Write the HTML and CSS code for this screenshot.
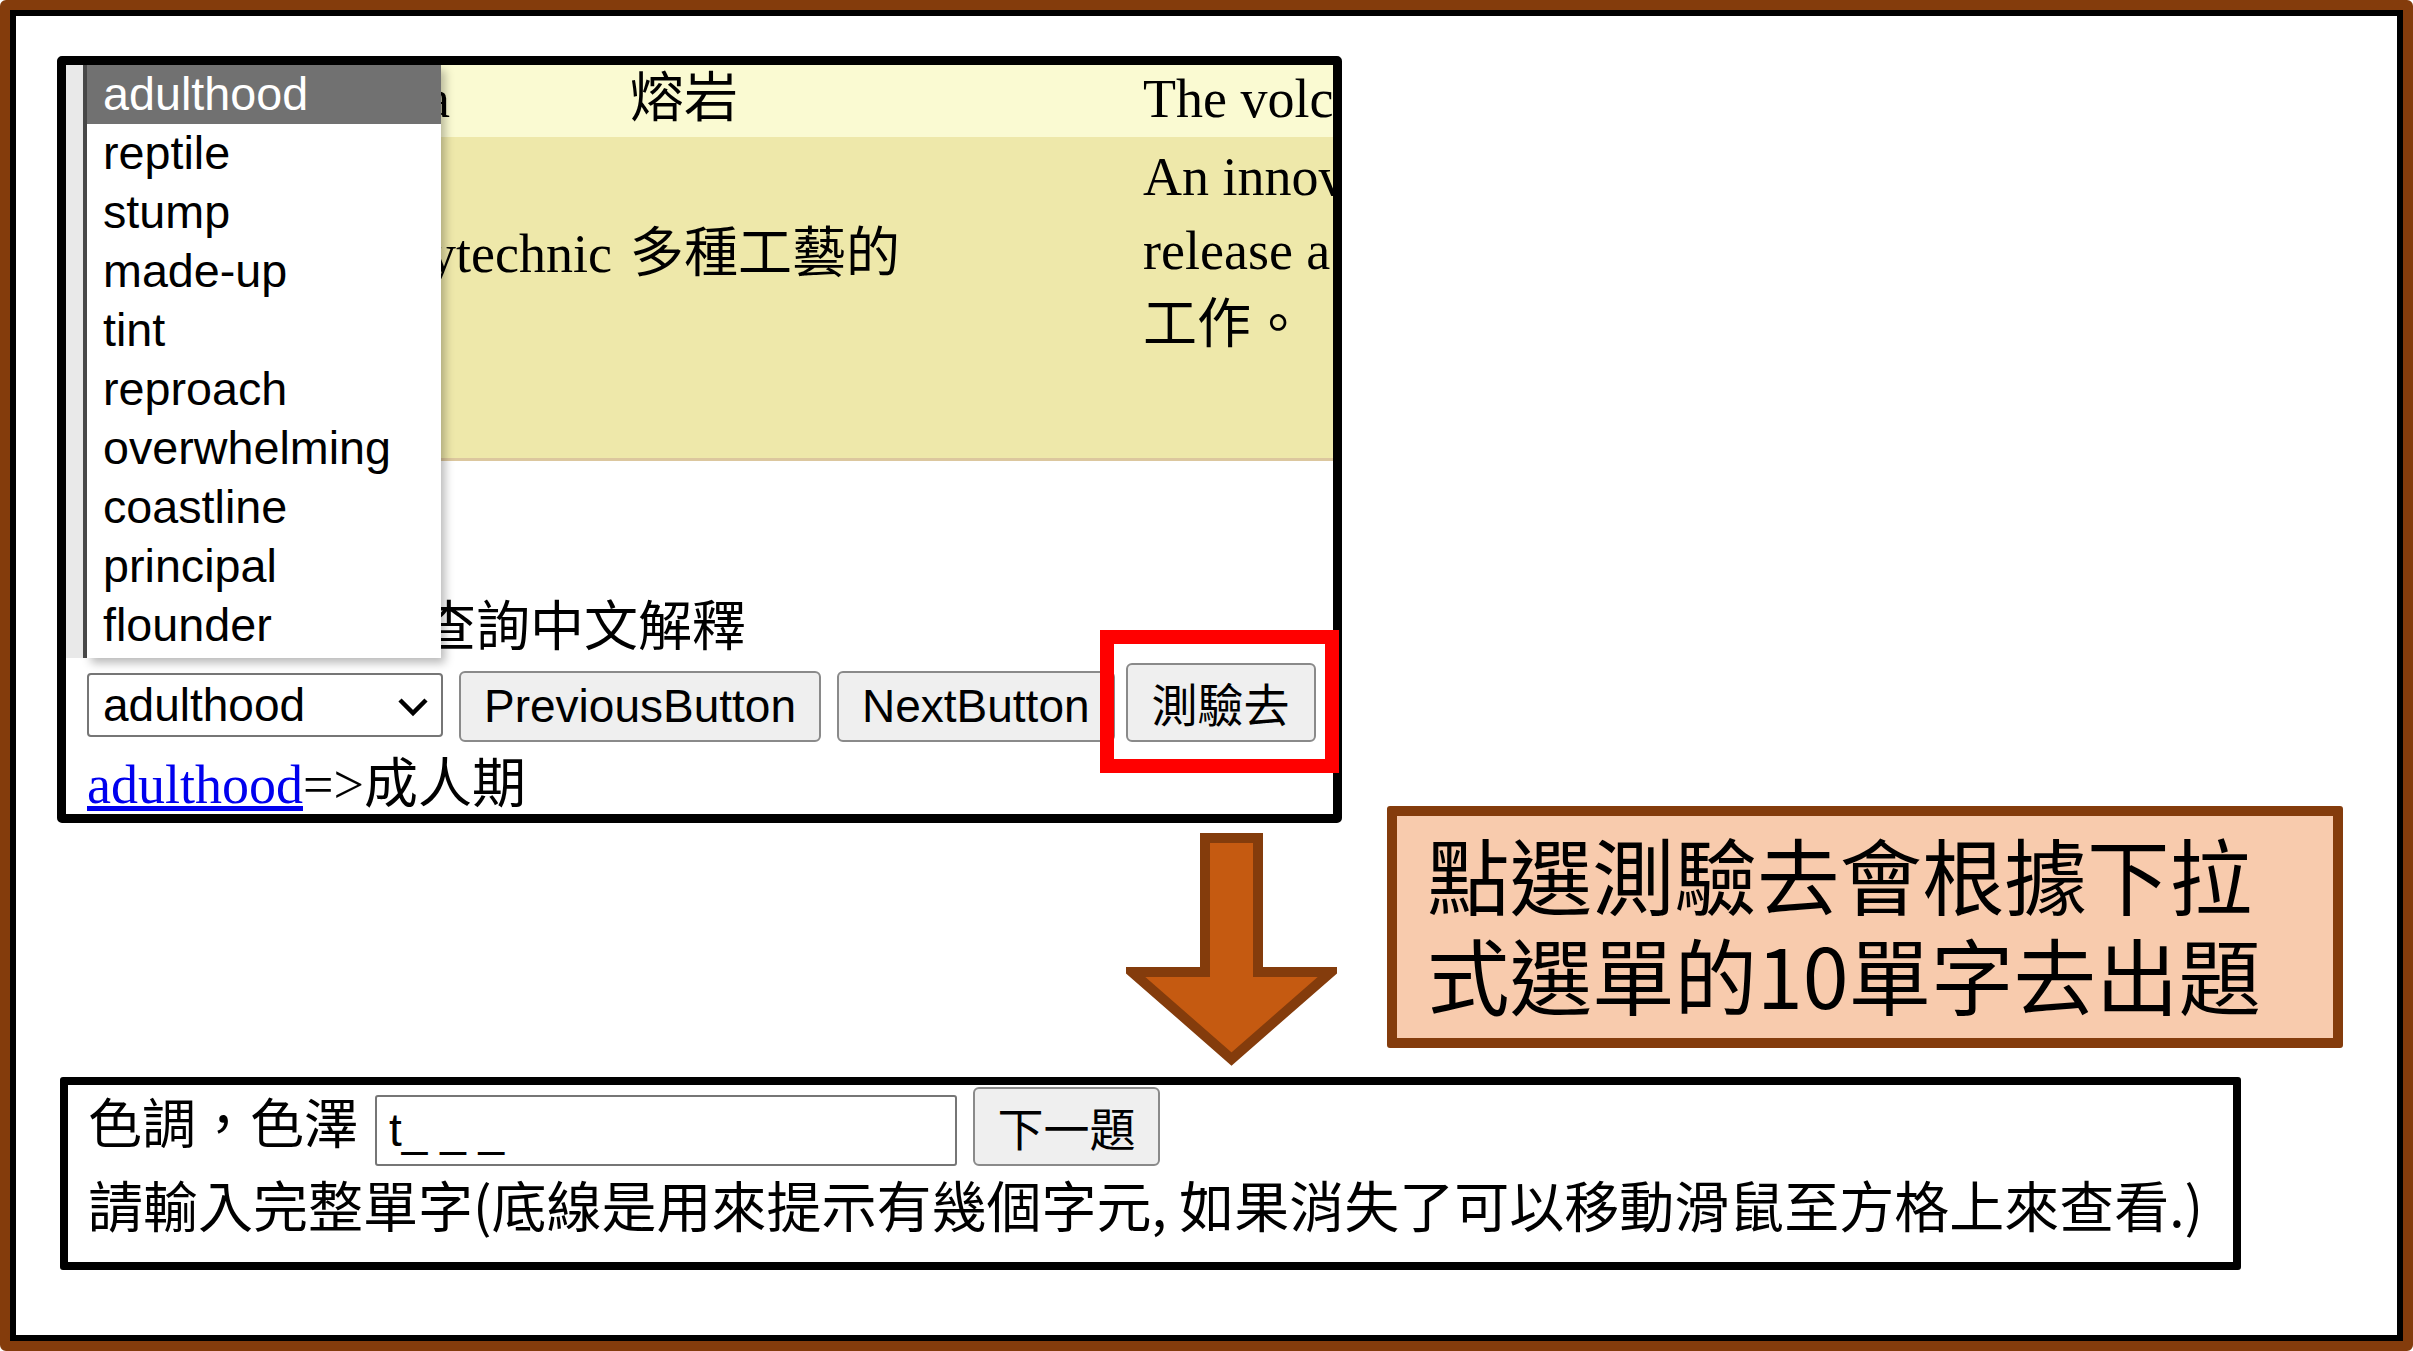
FILE: index.html
```html
<!DOCTYPE html>
<html lang="zh-Hant">
<head>
<meta charset="utf-8">
<title>測驗說明</title>
<link rel="stylesheet" href="styles.css">
</head>
<body>
<div class="slide">
  <div class="frame">
    <div class="top">
      <div class="left-col">
        <div class="shot">
          <div class="rows">
            <div class="row r1">
              <div class="c c0"></div>
              <div class="c c1">lava</div>
              <div class="c c2">熔岩</div>
              <div class="c c3">The volcano erupted and the lava flowed down the hill.</div>
            </div>
            <div class="row r2">
              <div class="c c0"></div>
              <div class="c c1 mid">polytechnic</div>
              <div class="c c2 mid">多種工藝的</div>
              <div class="c c3 top-pad">An innovative polytechnic school will<br>release a new program for the<br>工作。</div>
            </div>
          </div>
          <div class="below">
            <div class="label">選擇單字後可查詢中文解釋</div>
            <div class="controls">
              <div class="select">
                <span>adulthood</span>
                <svg class="chev" width="32" height="20" viewBox="0 0 32 20"><path d="M3 3 L16 16 L29 3" fill="none" stroke="#000" stroke-width="4.5"/></svg>
              </div>
              <div class="btn btn-nav">PreviousButton</div>
              <div class="btn btn-nav">NextButton</div>
              <div class="btn btn-cjk btn-go">測驗去</div>
            </div>
            <div class="result"><a class="word" href="#">adulthood</a>=&gt;成人期</div>
          </div>
          <div class="popup">
            <div class="strip"></div>
            <div class="edge"></div>
            <ul class="list">
              <li class="sel">adulthood</li>
              <li>reptile</li>
              <li>stump</li>
              <li>made-up</li>
              <li>tint</li>
              <li>reproach</li>
              <li>overwhelming</li>
              <li>coastline</li>
              <li>principal</li>
              <li>flounder</li>
            </ul>
          </div>
        </div>
        <svg class="arrow" width="211" height="234" viewBox="0 0 211 234">
          <polygon points="79,5 132,5 132,139 205,139 105.5,226 6,139 79,139" fill="#C55A11" stroke="#843C0C" stroke-width="10" stroke-linejoin="miter"/>
        </svg>
        <div class="mark"></div>
      </div>
      <div class="callout">點選測驗去會根據下拉<br>式選單的10單字去出題</div>
    </div>
    <div class="quiz">
      <div class="q-row">
        <div class="q-text">色調，色澤</div>
        <div class="q-input">t_ _ _</div>
        <div class="btn btn-cjk q-btn">下一題</div>
      </div>
      <div class="q-hint">請輸入完整單字(底線是用來提示有幾個字元, 如果消失了可以移動滑鼠至方格上來查看.)</div>
    </div>
  </div>
</div>
</body>
</html>
```
FILE: styles.css
```css
html, body {
  margin: 0;
  padding: 0;
  background: #ffffff;
}
body {
  width: 2413px;
  height: 1351px;
  overflow: hidden;
}
.slide {
  width: 2413px;
  height: 1351px;
  box-sizing: border-box;
  border: 10px solid #843C0C;
  border-radius: 6px;
  background: #ffffff;
}
.frame {
  height: 100%;
  box-sizing: border-box;
  border: 6px solid #000000;
  background: #ffffff;
}
.top {
  display: flex;
  align-items: flex-start;
}
.left-col {
  position: relative;
  display: flex;
  flex-direction: column;
  margin-left: 41px;
  margin-top: 40px;
}
.shot {
  position: relative;
  width: 1285px;
  height: 767px;
  box-sizing: border-box;
  border: 9px solid #000000;
  border-radius: 5px;
  overflow: hidden;
  background: #ffffff;
  font-family: "Liberation Serif", "Noto Sans CJK TC", serif;
  font-size: 54px;
  color: #000000;
}
.rows {
  width: 1800px;
}
.row {
  display: grid;
  grid-template-columns: 294px 270px 513px 723px;
  white-space: nowrap;
}
.r1 {
  height: 72px;
  align-items: start;
  padding-top: 3px;
  box-sizing: border-box;
  line-height: 62px;
  background: #FAFAD2;
}
.r2 {
  height: 321px;
  align-items: start;
  line-height: 74px;
  background: #EEE8AA;
  border-bottom: 3px solid #DCC79E;
}
.mid {
  padding-top: 80px;
}
.top-pad {
  padding-top: 3px;
}
.below {
  padding-left: 21px;
}
.label {
  margin-top: 135px;
  padding-left: 11px;
  line-height: 64px;
  white-space: nowrap;
}
.controls {
  display: flex;
  align-items: flex-start;
  gap: 16px;
  margin-top: 3px;
  height: 79px;
}
.select {
  margin-top: 10px;
  width: 356px;
  height: 64px;
  box-sizing: border-box;
  border: 2px solid #767676;
  border-radius: 4px;
  background: #ffffff;
  display: flex;
  align-items: center;
  justify-content: space-between;
  padding: 0 12px 0 14px;
  font-family: "Liberation Sans", "Noto Sans CJK TC", sans-serif;
  font-size: 46px;
  line-height: 1.15;
}
.chev {
  margin-top: 4px;
}
.btn {
  box-sizing: border-box;
  border: 2px solid #8a8a8a;
  border-radius: 6px;
  background: #EFEFEF;
  padding: 0 23px;
  display: flex;
  align-items: center;
  justify-content: center;
  font-family: "Liberation Sans", "Noto Sans CJK TC", sans-serif;
  font-size: 46px;
  line-height: 1.15;
  color: #000000;
  white-space: nowrap;
}
.btn-nav {
  margin-top: 8px;
  height: 71px;
}
.btn-cjk {
  height: 79px;
  padding: 0 24px;
  font-family: "Noto Sans CJK TC", sans-serif;
}
.btn-go {
  margin-left: -5px;
}
.result {
  margin-top: 11px;
  line-height: 64px;
  white-space: nowrap;
}
.word {
  color: #0000EE;
  text-decoration: underline;
}
.popup {
  position: absolute;
  left: 0;
  top: 0;
  height: 593px;
  display: flex;
}
.strip {
  width: 17px;
  background: #E9E9E9;
}
.edge {
  width: 4px;
  background: #4a4a4a;
}
.list {
  list-style: none;
  margin: 0;
  padding: 0;
  width: 354px;
  background: #ffffff;
  box-shadow: 4px 5px 9px rgba(0, 0, 0, 0.28);
  font-family: "Liberation Sans", sans-serif;
  font-size: 46.7px;
}
.list li {
  height: 59px;
  line-height: 59px;
  padding-left: 16px;
  color: #000000;
}
.list li.sel {
  background: #717171;
  color: #ffffff;
}
.arrow {
  display: block;
  margin-top: 10px;
  margin-left: 1069px;
}
.mark {
  position: absolute;
  left: 1043px;
  top: 574px;
  width: 239px;
  height: 143px;
  box-sizing: border-box;
  border: 14px solid #FF0000;
}
.callout {
  margin-left: 45px;
  margin-top: 790px;
  width: 956px;
  height: 242px;
  box-sizing: border-box;
  border: 10px solid #843C0C;
  border-radius: 3px;
  background: #F8CBAD;
  padding: 7px 0 0 30px;
  font-family: "Noto Sans CJK TC", sans-serif;
  font-size: 82.5px;
  line-height: 100px;
  color: #000000;
  white-space: nowrap;
}
.quiz {
  margin-left: 44px;
  margin-top: 10px;
  width: 2181px;
  height: 193px;
  box-sizing: border-box;
  border: 8px solid #000000;
  border-radius: 3px;
  padding-left: 20px;
  font-family: "Noto Sans CJK TC", sans-serif;
  font-size: 54px;
  color: #000000;
}
.q-row {
  display: flex;
  align-items: flex-start;
}
.q-text {
  margin-top: 4px;
  line-height: 64px;
  white-space: nowrap;
}
.q-input {
  margin-left: 17px;
  margin-top: 10px;
  width: 582px;
  height: 71px;
  box-sizing: border-box;
  border: 2px solid #767676;
  border-radius: 3px;
  padding-left: 12px;
  font-family: "Liberation Sans", sans-serif;
  font-size: 46px;
  line-height: 67px;
  white-space: pre;
}
.q-btn {
  margin-left: 16px;
  margin-top: 2px;
  width: 187px;
}
.q-hint {
  margin-top: 5px;
  font-size: 55px;
  line-height: 64px;
  white-space: nowrap;
}
```
